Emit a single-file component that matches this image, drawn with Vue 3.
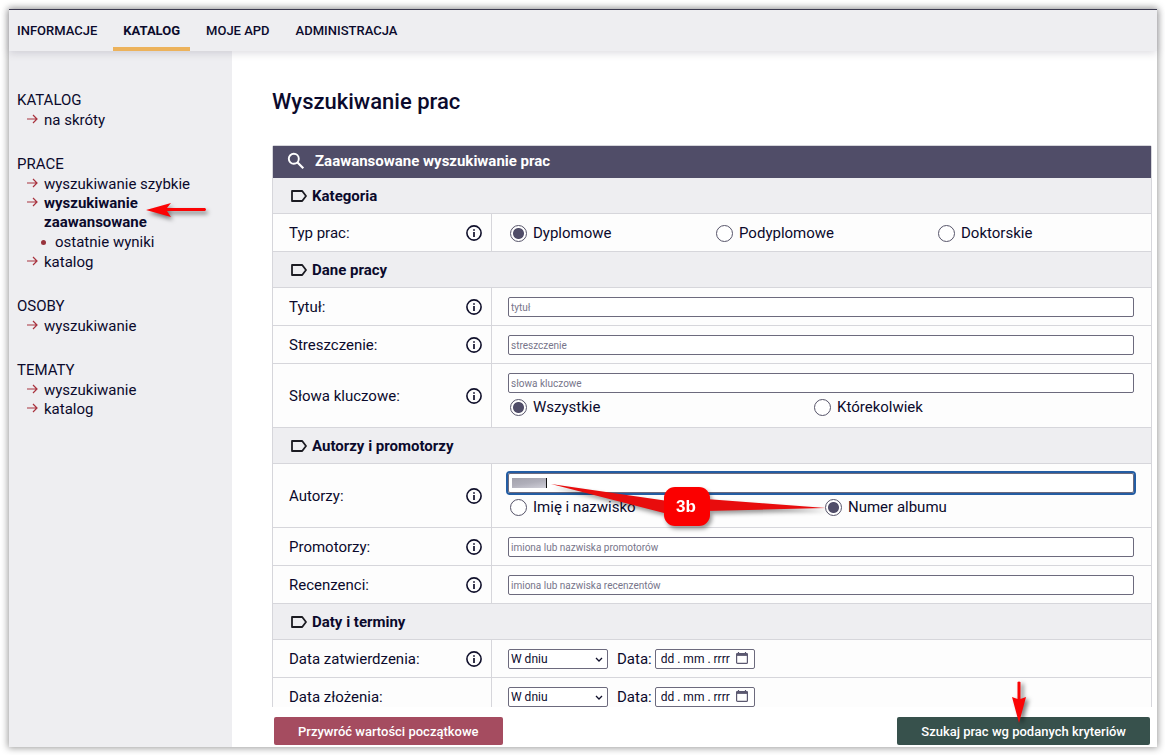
<script setup>
import { reactive } from 'vue'

const nav = [
  { label: 'INFORMACJE' },
  { label: 'KATALOG', active: true },
  { label: 'MOJE APD' },
  { label: 'ADMINISTRACJA' },
]

const menu = [
  { title: 'KATALOG', items: [{ label: 'na skróty' }] },
  {
    title: 'PRACE',
    items: [
      { label: 'wyszukiwanie szybkie' },
      { label: 'wyszukiwanie zaawansowane', active: true, children: ['ostatnie wyniki'] },
      { label: 'katalog' },
    ],
  },
  { title: 'OSOBY', items: [{ label: 'wyszukiwanie' }] },
  { title: 'TEMATY', items: [{ label: 'wyszukiwanie' }, { label: 'katalog' }] },
]

const sections = [
  {
    title: 'Kategoria',
    rows: [
      { id: 'typ', label: 'Typ prac:', info: true, layout: 'three', options: ['Dyplomowe', 'Podyplomowe', 'Doktorskie'] },
    ],
  },
  {
    title: 'Dane pracy',
    rows: [
      { id: 'tytul', label: 'Tytuł:', info: true, placeholder: 'tytuł' },
      { id: 'streszczenie', label: 'Streszczenie:', info: true, placeholder: 'streszczenie' },
      { id: 'slowa', label: 'Słowa kluczowe:', info: true, placeholder: 'słowa kluczowe', layout: 'keywords', options: ['Wszystkie', 'Którekolwiek'] },
    ],
  },
  {
    title: 'Autorzy i promotorzy',
    rows: [
      { id: 'autorzy', label: 'Autorzy:', info: true, placeholder: '', focused: true, layout: 'authors', options: ['Imię i nazwisko', 'Numer albumu'] },
      { id: 'promotorzy', label: 'Promotorzy:', info: true, placeholder: 'imiona lub nazwiska promotorów' },
      { id: 'recenzenci', label: 'Recenzenci:', info: true, placeholder: 'imiona lub nazwiska recenzentów' },
    ],
  },
  {
    title: 'Daty i terminy',
    rows: [
      { id: 'zatwierdzenie', label: 'Data zatwierdzenia:', info: true, date: true },
      { id: 'zlozenie', label: 'Data złożenia:', date: true },
    ],
  },
]

const chosen = reactive({ typ: 'Dyplomowe', slowa: 'Wszystkie', autorzy: 'Numer albumu' })
</script>

<template>
  <div class="page">
    <div class="frame">
      <nav class="topnav">
        <a v-for="n in nav" :key="n.label" href="#" :class="{ active: n.active }">{{ n.label }}</a>
      </nav>
      <div class="body">
        <aside class="sidebar">
          <section v-for="g in menu" :key="g.title" class="group">
            <h2>{{ g.title }}</h2>
            <ul>
              <li v-for="i in g.items" :key="i.label">
                <div class="entry">
                  <svg class="arrow" width="11" height="10" viewBox="0 0 11 10" fill="none" stroke="#a8323e" stroke-width="1.2">
                    <path d="M0 5H10M6 1L10 5L6 9" />
                  </svg>
                  <a href="#" :class="{ active: i.active }">{{ i.label }}</a>
                  <svg v-if="i.active" class="mark-side" width="70" height="24" viewBox="0 0 70 24">
                    <path d="M4 10L29 3L25 8H63Q65 9.500 63 11H25L29 17Z" fill="#fb0405" />
                  </svg>
                </div>
                <ul v-if="i.children" class="nested">
                  <li v-for="c in i.children" :key="c"><a href="#">{{ c }}</a></li>
                </ul>
              </li>
            </ul>
          </section>
        </aside>

        <main class="main">
          <div class="scroll">
            <h1>Wyszukiwanie prac</h1>
            <form class="panel">
              <div class="panel-head">
                <svg width="18" height="18" viewBox="0 0 18 18" fill="none" stroke="#fff">
                  <circle cx="6.800" cy="6.800" r="5" stroke-width="1.900" />
                  <path d="M10.500 10.500L16.300 16.300" stroke-width="2.200" />
                </svg>
                <span>Zaawansowane wyszukiwanie prac</span>
              </div>
              <template v-for="s in sections" :key="s.title">
                <h3 class="section-head">
                  <svg width="16" height="12" viewBox="0 0 16 12" fill="none" stroke="#1b1b22" stroke-width="1.800" stroke-linejoin="round">
                    <path d="M1 1H11.200L15 6L11.200 11H1Z" />
                  </svg>
                  <span>{{ s.title }}</span>
                </h3>
                <div v-for="r in s.rows" :key="r.id" class="row">
                  <div class="label">
                    <label :for="r.id">{{ r.label }}</label>
                    <svg v-if="r.info" width="16" height="16" viewBox="0 0 16 16">
                      <circle cx="8" cy="8" r="7.100" fill="none" stroke="#10102b" stroke-width="1.600" />
                      <path d="M8 7V12M8 4.200V5.800" stroke="#10102b" stroke-width="1.700" />
                    </svg>
                  </div>
                  <div class="field">
                    <input v-if="r.placeholder !== undefined" :id="r.id" class="text" :class="{ focused: r.focused }" type="text" :placeholder="r.placeholder">
                    <span v-if="r.focused" class="masked"></span>
                    <div v-if="r.options" class="options" :class="r.layout">
                      <label v-for="(o, k) in r.options" :key="o">
                        <input :id="r.placeholder === undefined && k === 0 ? r.id : undefined" v-model="chosen[r.id]" type="radio" :name="r.id" :value="o">
                        {{ o }}
                      </label>
                    </div>
                    <div v-if="r.date" class="dates">
                      <span class="box">
                        <select :id="r.id"><option>W dniu</option></select>
                        <svg class="chevron" width="8" height="6" viewBox="0 0 8 6" fill="none" stroke="#10102b" stroke-width="1.300"><path d="M1 1L4 4L7 1" /></svg>
                      </span>
                      <label :for="r.id + '-d'">Data:</label>
                      <span class="box">
                        <input :id="r.id + '-d'" class="day" type="text" placeholder="dd . mm . rrrr">
                        <svg class="calendar" width="12" height="12" viewBox="0 0 12 12" fill="none" stroke="#5b5870">
                          <rect x="0.600" y="1.600" width="10.800" height="9.800" rx="1" stroke-width="1.200" />
                          <path d="M0 2.700H12" stroke-width="2.400" />
                          <path d="M2.500 0V2M9.500 0V2" stroke-width="1.200" />
                        </svg>
                      </span>
                    </div>
                    <svg v-if="r.focused" class="callout" width="290" height="56" viewBox="0 0 290 56">
                      <path d="M3 4L120 21V34ZM278 28L158 19V31Z" fill="#e80c0d" />
                      <rect x="116" y="7" width="46" height="39" rx="11" fill="#fb0000" />
                      <text x="138" y="32" text-anchor="middle" fill="#fff">3b</text>
                    </svg>
                  </div>
                </div>
              </template>
            </form>
          </div>
          <footer class="actions">
            <button type="button" class="reset">Przywróć wartości początkowe</button>
            <button type="button" class="search">
              Szukaj prac wg podanych kryteriów
              <svg class="mark-down" width="24" height="46" viewBox="0 0 24 46">
                <path d="M5 17L10.500 19V2Q12 1 13.500 2V19L19 17L12 43Z" fill="#fb0405" />
              </svg>
            </button>
          </footer>
        </main>
      </div>
    </div>
  </div>
</template>

<style>
body {
  background: #fff;
}
</style>

<style scoped>
.page {
  box-sizing: border-box;
  height: 100vh;
  padding: 9px 8px 8px 9px;
  color: #0b0a2c;
  font: 15px/20px Roboto, "Liberation Sans", sans-serif;
}
.frame {
  height: 100%;
  display: flex;
  flex-direction: column;
  background: #fff;
  box-shadow: 0 0 7px 1px rgba(0, 0, 0, 0.4);
}
a {
  color: inherit;
  text-decoration: none;
}
h1, h2, h3, ul {
  margin: 0;
  padding: 0;
  font: inherit;
  list-style: none;
}
.topnav {
  position: relative;
  z-index: 1;
  box-sizing: border-box;
  height: 42px;
  flex: none;
  display: flex;
  gap: 6px;
  background: #eeeef1;
  border-top: 1px solid #3b394f;
  box-shadow: 0 2px 8px rgba(80, 77, 102, 0.2);
  font-size: 13px;
  font-weight: 500;
}
.topnav a {
  padding: 11px 10px 6px;
  border-bottom: 4px solid transparent;
}
.topnav a:first-child {
  padding-left: 8px;
}
.topnav a.active {
  border-color: #ecb25c;
  font-weight: 700;
}
.body {
  flex: 1;
  min-height: 0;
  display: flex;
}
.sidebar {
  box-sizing: border-box;
  width: 223px;
  flex: none;
  padding: 39px 8px 0;
  background: #eeeef1;
}
.group {
  margin-bottom: 24px;
}
.group > ul {
  padding: 1px 0 0 10px;
  line-height: 19px;
}
.entry {
  position: relative;
  display: flex;
}
.entry > a {
  margin-left: 6px;
}
.entry a.active {
  font-weight: 700;
}
.arrow {
  flex: none;
  margin-top: 3px;
}
.nested {
  margin: 1px 0 1px 14px;
}
.nested li {
  display: flex;
  align-items: center;
  gap: 9px;
}
.nested li::before {
  content: "";
  width: 5px;
  height: 5px;
  border-radius: 50%;
  background: #98333c;
}
.mark-side {
  position: absolute;
  left: 115px;
  top: 6px;
  filter: drop-shadow(2px 3px 2px rgba(0, 0, 0, 0.5));
}
.main {
  flex: 1;
  min-width: 0;
  display: flex;
  flex-direction: column;
  padding: 0 5px 0 40px;
}
.scroll {
  flex: 1;
  min-height: 0;
  overflow: hidden;
  padding-top: 37px;
}
h1 {
  margin-bottom: 29px;
  font-size: 22px;
  line-height: 28px;
  font-weight: 500;
}
.panel {
  border: 1px solid #d6d6db;
  border-radius: 2px;
  background: #fdfdfd;
}
.panel-head {
  box-sizing: border-box;
  height: 32px;
  display: flex;
  align-items: center;
  gap: 10px;
  padding: 0 14px 2px;
  background: #504d68;
  color: #fff;
  font-weight: 700;
}
.section-head {
  box-sizing: border-box;
  height: 36px;
  display: flex;
  align-items: center;
  gap: 5px;
  padding: 0 18px;
  background: #eeeef1;
  border-bottom: 1px solid #d6d6db;
  font-weight: 700;
}
.row {
  box-sizing: border-box;
  display: grid;
  grid-template-columns: 219px 1fr;
  border-bottom: 1px solid #d6d6db;
}
.label {
  display: flex;
  align-items: center;
  justify-content: space-between;
  padding: 0 9px 0 16px;
  border-right: 1px solid #d6d6db;
}
.field {
  position: relative;
  padding: 9px 17px 8px 16px;
}
.text, select, .day {
  box-sizing: border-box;
  display: block;
  height: 20px;
  margin: 0;
  border: 1px solid #6c6a7d;
  border-radius: 2px;
  background: #fff;
  color: #0b0a2c;
  font-family: inherit;
}
.text {
  width: 100%;
  padding: 0 2px;
  font-size: 10px;
}
.text::placeholder {
  color: #77758a;
  opacity: 1;
}
.text.focused {
  outline: 2px solid #245da3;
}
.masked {
  position: absolute;
  left: 20px;
  top: 14px;
  width: 34px;
  height: 10px;
  background: linear-gradient(170deg, #a3a2ac, #b0afba 50%, #d0cfd8);
  border-right: 1px solid #111;
}
.options {
  display: grid;
}
.text ~ .options {
  margin: 4px 0 2px;
}
.options.three {
  grid-template-columns: 206fr 222fr 198fr;
}
.options.keywords {
  grid-template-columns: 304fr 322fr;
}
.options.authors {
  grid-template-columns: 315fr 311fr;
}
.options label {
  display: flex;
  align-items: center;
  gap: 6px;
  padding-left: 2px;
}
.options input {
  appearance: none;
  width: 17px;
  height: 17px;
  margin: 0;
  border: 1px solid #565469;
  border-radius: 50%;
  background: #fff;
}
.options input:checked {
  background: radial-gradient(circle, #504d68 5px, #fff 6px);
}
.dates {
  display: flex;
  align-items: center;
}
.dates label {
  margin: 0 3px 0 9px;
}
.box {
  position: relative;
}
select, .day {
  width: 100px;
  font-size: 12px;
}
select {
  appearance: none;
  padding: 0 2px;
}
.day {
  padding: 0 5px;
}
.day::placeholder {
  color: #0b0a2c;
  opacity: 1;
}
.chevron {
  position: absolute;
  right: 5px;
  top: 8px;
}
.calendar {
  position: absolute;
  right: 7px;
  top: 3px;
}
.callout {
  position: absolute;
  left: 56px;
  top: 16px;
  overflow: visible;
  filter: drop-shadow(2px 3px 2px rgba(0, 0, 0, 0.4));
  font: 700 17px "Liberation Sans", sans-serif;
}
.actions {
  flex: none;
  display: flex;
  justify-content: space-between;
  padding: 10px 2px 2px;
}
.actions button {
  position: relative;
  height: 28px;
  padding: 0 24px;
  border: 0;
  border-radius: 2px;
  color: #fff;
  font: 500 13px Roboto, "Liberation Sans", sans-serif;
}
.reset {
  background: #a54c60;
}
.search {
  background: #37514c;
}
.mark-down {
  position: absolute;
  left: 110px;
  top: -37px;
  filter: drop-shadow(3px 2px 2px rgba(0, 0, 0, 0.5));
}
</style>
